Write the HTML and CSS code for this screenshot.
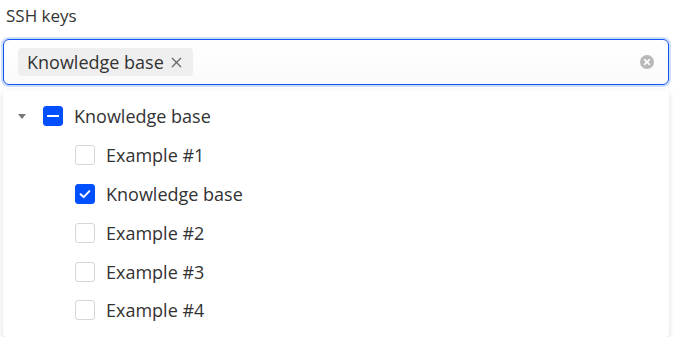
FILE: index.html
```html
<!DOCTYPE html>
<html lang="en">
<head>
  <meta charset="UTF-8" />
  <title>SSH keys</title>
  <link rel="stylesheet" href="styles.css">
</head>
<body>

  <div class="field">
    <label class="field-label">SSH keys</label>
    <div class="select">
      <span class="tag">Knowledge base
        <svg class="tag-close" width="11" height="11" viewBox="0 0 11 11"><path d="M1 1 L10 10 M10 1 L1 10" stroke="#666" stroke-width="1.3"/></svg>
      </span>
      <span class="clear">
        <svg width="14" height="14" viewBox="0 0 14 14"><circle cx="7" cy="7" r="7" fill="#b8b8b8"/><path d="M4.6 4.6 L9.4 9.4 M9.4 4.6 L4.6 9.4" stroke="#fff" stroke-width="1.6" stroke-linecap="round"/></svg>
      </span>
    </div>

    <div class="dropdown">
      <div class="row">
        <span class="caret"></span>
        <span class="box partial"><span class="dash"></span></span>
        <span class="text">Knowledge base</span>
      </div>
      <div class="row child">
        <span class="box"></span>
        <span class="text">Example #1</span>
      </div>
      <div class="row child">
        <span class="box checked">
          <svg width="14" height="14" viewBox="0 0 14 14"><path d="M2.6 7.2 L5.7 10.1 L11.4 4.1" fill="none" stroke="#fff" stroke-width="2" stroke-linecap="round" stroke-linejoin="round"/></svg>
        </span>
        <span class="text">Knowledge base</span>
      </div>
      <div class="row child">
        <span class="box"></span>
        <span class="text">Example #2</span>
      </div>
      <div class="row child">
        <span class="box"></span>
        <span class="text">Example #3</span>
      </div>
      <div class="row child">
        <span class="box"></span>
        <span class="text">Example #4</span>
      </div>
    </div>
  </div>

</body>
</html>
```

FILE: styles.css
```css
body {
  margin: 0;
  background: #fff;
  font-family: "Open Sans", "Noto Sans", sans-serif;
  color: #333;
}
.field {
  width: 666px;
  padding: 4px 0 0 3px;
}
.field-label {
  display: block;
  font-size: 17px;
  line-height: 24px;
  margin-left: 3px;
  color: #333;
}
.select {
  margin-top: 11px;
  height: 46px;
  border: 1px solid #0f55f0;
  border-radius: 6px;
  box-shadow: 0 0 0 2px #cfdcfb;
  display: flex;
  align-items: center;
  padding: 0 14px;
  box-sizing: border-box;
  background: linear-gradient(#fff, #fafafa);
}
.tag {
  background: #efefef;
  border-radius: 4px;
  height: 28px;
  padding: 0 11px 0 9px;
  font-size: 18px;
  color: #333;
  display: flex;
  align-items: center;
}
.tag-close {
  margin-left: 7px;
}
.clear {
  margin-left: auto;
  display: flex;
}
.dropdown {
  margin-top: 5px;
  background: #fff;
  border-radius: 4px;
  box-shadow: 0 2px 6px rgba(0,0,0,0.14);
  padding: 7px 0;
}
.row {
  display: flex;
  align-items: center;
  height: 38.8px;
  font-size: 18px;
}
.caret {
  width: 0;
  height: 0;
  border-left: 4px solid transparent;
  border-right: 4px solid transparent;
  border-top: 5px solid #777;
  margin: 0 17px 0 15px;
}
.box {
  width: 20px;
  height: 20px;
  box-sizing: border-box;
  border: 1px solid #d6d6d6;
  border-radius: 3px;
  display: flex;
  align-items: center;
  justify-content: center;
  margin-right: 11px;
}
.box.partial, .box.checked {
  background: #0050ff;
  border-color: #0050ff;
}
.dash {
  width: 12px;
  height: 2px;
  background: #fff;
}
.child {
  padding-left: 72px;
}
```
